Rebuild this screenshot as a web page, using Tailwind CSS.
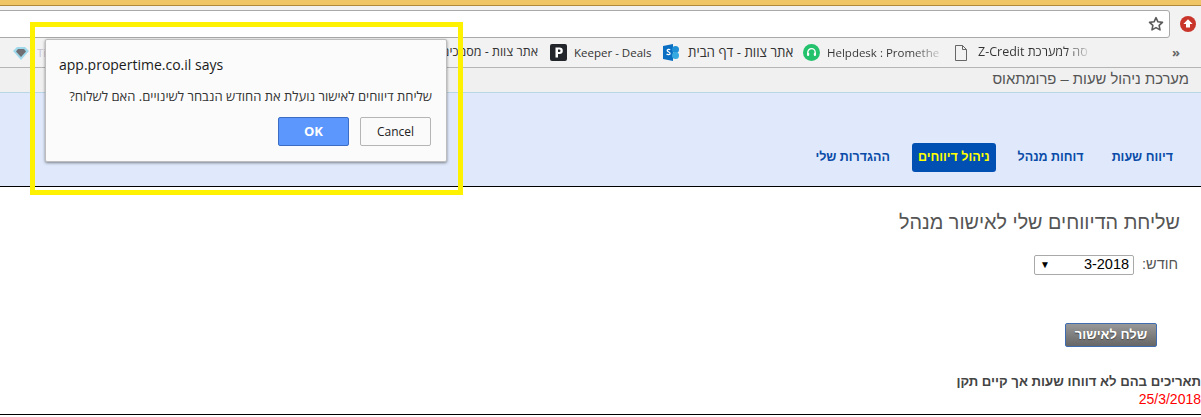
<!DOCTYPE html>
<html lang="he">
<head>
<meta charset="utf-8">
<script src="https://cdn.jsdelivr.net/npm/@tailwindcss/browser@4"></script>
<title>app.propertime.co.il</title>
</head>
<body class="relative w-[1201px] h-[417px] overflow-hidden bg-white font-['Liberation_Sans',sans-serif]">
  <!-- Browser chrome -->
  <div class="h-[6px] bg-[#f0c566] border-b border-[#b08a3a]"></div>
  <div class="h-[31px] bg-[#f2f2f2] pt-[4px] flex items-start">
    <div class="flex-1 -ml-[4px] h-[28px] bg-white border border-[#a9a9a9] rounded-[3px] flex items-center justify-end pr-[5px]">
      <svg width="16" height="16" viewBox="0 0 24 24" fill="none" stroke="#5a5a5a" stroke-width="2.4" stroke-linejoin="round"><path d="M12 2.5l2.9 6.2 6.8.8-5 4.6 1.3 6.7-6-3.3-6 3.3 1.3-6.7-5-4.6 6.8-.8z"/></svg>
    </div>
    <div class="w-[31px] pt-[6px] pl-[10px] shrink-0">
      <svg width="16" height="16" viewBox="0 0 16 16"><circle cx="8" cy="8" r="8" fill="#c9352b"/><path d="M8 3.2L12.6 8H10v3.6H6V8H3.4z" fill="#fff"/></svg>
    </div>
  </div>
  <div class="h-[31px] bg-[#f2f2f2] border-b border-[#b5b5b5] flex items-center text-[11.500px] text-[#333] font-['Open_Sans','Liberation_Sans',sans-serif] pt-[1px]">
    <svg class="ml-[13px] shrink-0" width="16" height="14" viewBox="0 0 16 14"><path d="M4 1h8l4 4-8 9-8-9z" fill="#9fd8ea"/><path d="M5 3h6l2 2.400-5 5.600-5-5.600z" fill="#6f6f73"/></svg>
    <span class="ml-[8px] w-[40px] text-[#c9c4d4] overflow-hidden whitespace-nowrap">Time</span>
    <div dir="rtl" class="w-[145px] ml-[316px] whitespace-nowrap overflow-hidden text-right shrink-0 text-[12.500px]">אתר צוות - מסמכים</div>
    <svg class="ml-[12px] shrink-0" width="17" height="17" viewBox="0 0 17 17"><rect width="17" height="17" rx="2" fill="#22262b"/><path d="M5.500 3.500h4a3.300 3.300 0 0 1 0 6.600H8v3.400H5.500zM8 5.600v2.400h1.300a1.200 1.200 0 0 0 0-2.400z" fill="#fff" fill-rule="evenodd"/></svg>
    <span class="ml-[7px] w-[89px] whitespace-nowrap shrink-0">Keeper - Deals</span>
    <svg class="shrink-0" width="17" height="17" viewBox="0 0 17 17"><path d="M0 2l10-2v17L0 15z" fill="#0a6fc2"/><circle cx="12.500" cy="5.500" r="3.500" fill="#1e8fd5"/><circle cx="12.500" cy="11.500" r="3.500" fill="#36a9e1"/><path d="M7.200 5.800c-.8-.8-3.200-.7-3 .9.200 1.500 2.900 1.100 2.900 2.700 0 1.500-2.500 1.600-3.500.700" fill="none" stroke="#fff" stroke-width="1.300"/></svg>
    <div dir="rtl" class="ml-[8px] w-[115px] whitespace-nowrap shrink-0 text-left text-[13.300px]">אתר צוות - דף הבית</div>
    <svg class="shrink-0" width="17" height="17" viewBox="0 0 17 17"><circle cx="8.500" cy="8.500" r="8.500" fill="#25c26e"/><path d="M4.800 10V8.300a3.700 3.700 0 0 1 7.400 0V10" fill="none" stroke="#fff" stroke-width="1.400"/><rect x="4" y="8.800" width="2.200" height="3.200" rx="1" fill="#fff"/><rect x="10.800" y="8.800" width="2.200" height="3.200" rx="1" fill="#fff"/></svg>
    <span class="ml-[7px] w-[113px] overflow-hidden whitespace-nowrap shrink-0 bg-clip-text text-transparent bg-linear-to-r from-[#333] from-75% to-[#d0d0d0]">Helpdesk : Prometheus</span>
    <svg class="ml-[15px] shrink-0" width="12" height="16" viewBox="0 0 12 16" fill="none" stroke="#666"><path d="M.5.500h7l4 4v11H.5zM7.500.500v4h4"/></svg>
    <div class="ml-[11px] w-[110px] overflow-hidden whitespace-nowrap shrink-0 bg-clip-text text-transparent bg-linear-to-r from-[#333] from-80% to-[#d8d8d8] text-[12.500px]"><span dir="rtl" class="inline-block">כניסה למערכת Z-Credit</span></div>
    <span class="ml-[84px] text-[#666] text-[13px] font-bold leading-none">»</span>
  </div>
  <!-- Page -->
  <div dir="rtl" class="h-[25px] bg-[#f0f0f0] border-b border-[#b9d6e6] pr-[12px] text-[14.800px] leading-[22px] text-[#555]">מערכת ניהול שעות – פרומתאוס</div>
  <nav dir="rtl" class="h-[94px] bg-[#dfe9fb] border-b border-black flex items-start pt-[50px] pr-[22px] gap-[16px] text-[12.500px] font-bold text-[#0a4ba8] leading-[28px]">
    <a class="px-[6px]">דיווח שעות</a>
    <a class="px-[6px]">דוחות מנהל</a>
    <a class="px-[6px] h-[29px] bg-[#0050b3] rounded-[3px] text-[#ffff00]">ניהול דיווחים</a>
    <a class="px-[6px]">ההגדרות שלי</a>
  </nav>
  <main dir="rtl" class="pr-[21px] text-[#555]">
    <h1 class="text-[19.800px] leading-[28px] mt-[21px]">שליחת הדיווחים שלי לאישור מנהל</h1>
    <div class="flex items-center gap-[8px] mt-[18px] mr-[2px] text-[14.500px]">
      <span>חודש:</span>
      <div class="w-[100px] h-[20px] border border-[#a9a9a9] rounded-[2px] bg-white flex items-center justify-between pr-[4px] pl-[5px] text-black">
        <span dir="ltr">3-2018</span>
        <span class="text-[10px]">▼</span>
      </div>
    </div>
    <div class="mt-[47px] mr-[23px] w-[92px] h-[24px] rounded-[2px] border border-[#3f6cb0] bg-linear-to-b from-[#999] to-[#666] text-white font-bold text-[13px] leading-[21px] text-center [text-shadow:0_1px_1px_#444]">שלח לאישור</div>
    <div class="mt-[26px] -mr-[21px] text-[13.200px] font-bold text-[#444] leading-[18px]">תאריכים בהם לא דווחו שעות אך קיים תקן</div>
    <div class="-mr-[21px] text-[14px] text-[#f00] leading-[16px]">25/3/2018</div>
  </main>
  <div class="absolute left-0 right-0 top-[414px] h-[1px] bg-black"></div>

  <!-- Annotation frame -->
  <div class="absolute left-[30px] top-[22px] w-[433px] h-[173px] border-[5px] border-[#fff200]"></div>

  <!-- Alert dialog -->
  <div class="absolute left-[45px] top-[39px] w-[402px] h-[123px] bg-[#fbfbfb] border border-[#bdbdbd] rounded-[2px] shadow-[0_1px_3px_rgba(0,0,0,0.45)] font-['Open_Sans','Liberation_Sans',sans-serif]">
    <div class="absolute left-[13px] top-[15px] text-[14px] leading-[20px] text-[#1a1a1a]">app.propertime.co.il says</div>
    <div dir="rtl" class="absolute right-[14px] top-[47px] text-[13px] leading-[18px] text-[#333] whitespace-nowrap">שליחת דיווחים לאישור נועלת את החודש הנבחר לשינויים. האם לשלוח?</div>
    <div class="absolute right-[15px] top-[77px] flex gap-[11px]">
      <button class="w-[71px] h-[29px] bg-[#5b97fc] border border-[#3b6dc4] rounded-[2px] text-white text-[13px] font-bold">OK</button>
      <button class="w-[71px] h-[29px] bg-[#fafafa] border border-[#b5b5b5] rounded-[2px] text-[#222] text-[12px]">Cancel</button>
    </div>
  </div>
</body>
</html>
